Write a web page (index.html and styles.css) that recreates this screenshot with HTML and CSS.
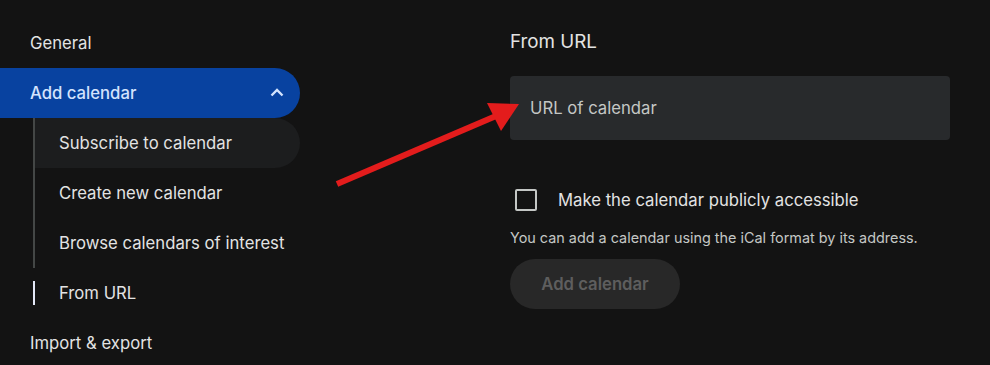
FILE: index.html
```html
<!DOCTYPE html>
<html lang="en">
<head>
    <meta charset="UTF-8" />
    <meta name="viewport" content="width=device-width, initial-scale=1.0" />
    <title>Settings - Add calendar</title>
    <link rel="stylesheet" href="styles.css">
</head>
<body>
    <div class="page">
        <nav class="sidebar">
            <div class="nav-item">General</div>
            <div class="nav-item selected">
                <span>Add calendar</span>
                <svg class="chevron" width="14" height="9" viewBox="0 0 14 9">
                    <polyline points="1.5,7.5 7,2 12.5,7.5" fill="none" stroke="#d3e3fd" stroke-width="2.4" />
                </svg>
            </div>
            <div class="sub-list">
                <div class="sub-item hover">Subscribe to calendar</div>
                <div class="sub-item">Create new calendar</div>
                <div class="sub-item">Browse calendars of interest</div>
                <div class="sub-item active">From URL</div>
            </div>
            <div class="nav-item">Import &amp; export</div>
        </nav>

        <main class="content">
            <h2>From URL</h2>
            <input type="text" class="url-input" placeholder="URL of calendar" />
            <label class="check-row">
                <span class="checkbox"></span>
                <span>Make the calendar publicly accessible</span>
            </label>
            <p class="hint">You can add a calendar using the iCal format by its address.</p>
            <button class="add-btn" disabled>Add calendar</button>
        </main>
    </div>

    <svg class="arrow" width="990" height="365" viewBox="0 0 990 365">
        <line x1="337" y1="184" x2="496" y2="116" stroke="#e31c1c" stroke-width="6" />
        <polygon points="487,103 519,104 501,131" fill="#e31c1c" />
    </svg>
</body>
</html>
```

FILE: styles.css
```css
* {
    margin: 0;
    padding: 0;
    box-sizing: border-box;
    font-family: 'Inter', 'Roboto', sans-serif;
}

body {
    background-color: #131313;
    color: #e3e3e3;
    width: 990px;
    height: 365px;
    overflow: hidden;
    position: relative;
}

.page {
    display: flex;
}

.sidebar {
    width: 300px;
    padding-top: 18px;
    flex-shrink: 0;
}

.nav-item {
    height: 50px;
    display: flex;
    align-items: center;
    justify-content: space-between;
    padding: 0 16px 0 30px;
    font-size: 16.7px;
}

.nav-item.selected {
    background-color: #0842a0;
    color: #d3e3fd;
    border-radius: 0 25px 25px 0;
    font-weight: 500;
}

.chevron {
    display: block;
    margin-top: -2px;
}

.sub-list {
    margin-left: 33px;
}

.sub-item {
    height: 50px;
    display: flex;
    align-items: center;
    padding-left: 24px;
    border-left: 2px solid #444746;
    font-size: 16.7px;
    position: relative;
}

.sub-item.hover {
    background-color: #1c1d1e;
    border-radius: 0 25px 25px 0;
}

.sub-item.active {
    border-left-color: transparent;
}

.sub-item.active::before {
    content: "";
    position: absolute;
    left: -2px;
    top: 13px;
    width: 2px;
    height: 24px;
    background-color: #e3e8f7;
}

.content {
    margin-left: 210px;
    width: 440px;
    padding-top: 30px;
    display: flex;
    flex-direction: column;
}

h2 {
    font-size: 18.8px;
    font-weight: 400;
    line-height: 24px;
    color: #e3e3e3;
}

.url-input {
    margin-top: 22px;
    height: 64px;
    width: 440px;
    background-color: #282a2c;
    border: none;
    outline: none;
    border-radius: 4px;
    padding: 0 20px;
    font-size: 16.7px;
    color: #e3e3e3;
}

.url-input::placeholder {
    color: #c4c7c5;
}

.check-row {
    margin-top: 49px;
    display: flex;
    align-items: center;
    font-size: 16.7px;
    height: 22px;
}

.checkbox {
    width: 22px;
    height: 22px;
    border: 2px solid #c4c7c5;
    border-radius: 2px;
    margin-left: 5px;
    margin-right: 21px;
}

.hint {
    margin-top: 18px;
    font-size: 14.4px;
    line-height: 18px;
    color: #c4c7c5;
}

.add-btn {
    margin-top: 12px;
    width: 170px;
    height: 50px;
    border: none;
    border-radius: 25px;
    background-color: #282828;
    color: #5e5e5e;
    font-size: 16.7px;
    font-weight: 600;
}

.arrow {
    position: absolute;
    top: 0;
    left: 0;
    pointer-events: none;
}
```
